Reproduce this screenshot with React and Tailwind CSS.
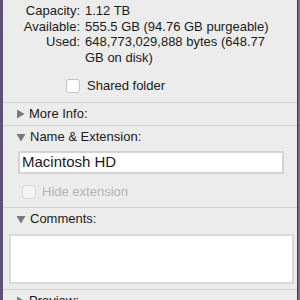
import React from "react";

const font = { fontFamily: '"Liberation Sans", Arial, sans-serif' };

function Tri({ open }) {
  return open ? (
    <svg width="10" height="9" viewBox="0 0 10 9" className="shrink-0">
      <path d="M0.5 1h9L5 8.5z" fill="#7a7a7a" />
    </svg>
  ) : (
    <svg width="9" height="10" viewBox="0 0 9 10" className="shrink-0">
      <path d="M1 0.5v9L8.5 5z" fill="#7a7a7a" />
    </svg>
  );
}

function Section({ open, title }) {
  return (
    <div className="flex items-center gap-[4px] pl-[13px] h-[22px] text-[13px] text-[#1a1a1a]">
      <Tri open={open} />
      <span>{title}</span>
    </div>
  );
}

export default function App() {
  const rows = [
    ["Capacity:", "1.12 TB"],
    ["Available:", "555.5 GB (94.76 GB purgeable)"],
    ["Used:", "648,773,029,888 bytes (648.77 GB on disk)"],
  ];
  return (
    <div className="w-[300px] h-[300px] overflow-hidden bg-[#6a5d7e] flex" style={font}>
      <div className="w-[3px] bg-[#5d5272]" />
      <div className="w-[294px] h-full bg-[#ececec] overflow-hidden">
        <div className="pt-[3px] text-[13px] leading-[15.5px] text-[#1a1a1a]">
          {rows.map(([k, v]) => (
            <div key={k} className="flex">
              <div className="w-[77px] text-right shrink-0">{k}</div>
              <div className="pl-[5px] pr-[14px]">{v}</div>
            </div>
          ))}
        </div>
        <div className="flex items-center gap-[7px] pl-[63px] mt-[14px] h-[14px] text-[13px] text-[#1a1a1a]">
          <div className="w-[14px] h-[14px] rounded-[3px] bg-white border border-[#c4c4c4]" />
          <span>Shared folder</span>
        </div>
        <div className="mt-[9px] h-px bg-[#d3d3d3]" />
        <Section title="More Info:" />
        <div className="h-px bg-[#d3d3d3]" />
        <Section open title="Name & Extension:" />
        <div className="ml-[15px] mt-[3px] w-[266px] h-[23px] bg-white border-2 border-[#d4d4d4] flex items-center pl-[2px] text-[15px] text-[#1a1a1a]">
          Macintosh HD
        </div>
        <div className="flex items-center gap-[6px] pl-[19px] mt-[11px] h-[14px] text-[13px] text-[#b3b3b3]">
          <div className="w-[14px] h-[14px] rounded-[3px] bg-[#f3f3f3] border border-[#d8d8d8]" />
          <span>Hide extension</span>
        </div>
        <div className="mt-[8px] h-px bg-[#d3d3d3]" />
        <Section open title="Comments:" />
        <div className="ml-[6px] mt-[4px] w-[285px] h-[50px] bg-white border-2 border-[#d9d9d9]" />
        <div className="mt-[5px] h-px bg-[#d3d3d3]" />
        <Section title="Preview:" />
      </div>
      <div className="w-px bg-[#3d3850]" />
      <div className="flex-1 bg-[#7a6b8c]" />
    </div>
  );
}
